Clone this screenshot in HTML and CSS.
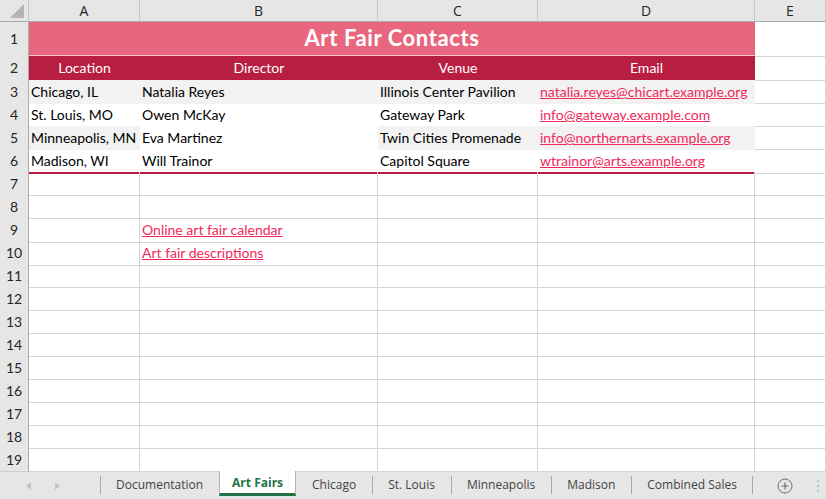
FILE: index.html
```html
<!DOCTYPE html>
<html lang="en">
<head>
    <meta charset="UTF-8">
    <title>Art Fair Contacts</title>
    <link rel="stylesheet" href="styles.css">
</head>
<body>

    <div class="sheet">
        <div class="row col-heads">
            <div class="corner"><span class="corner-tri"></span></div>
            <div class="col-head">A</div>
            <div class="col-head">B</div>
            <div class="col-head">C</div>
            <div class="col-head">D</div>
            <div class="col-head">E</div>
        </div>

        <div class="row r-title">
            <div class="row-num">1</div>
            <div class="title">Art Fair Contacts</div>
            <div class="cell"></div>
        </div>

        <div class="row r-head">
            <div class="row-num">2</div>
            <div class="th">Location</div>
            <div class="th">Director</div>
            <div class="th">Venue</div>
            <div class="th">Email</div>
            <div class="cell"></div>
        </div>

        <div class="row r-data">
            <div class="row-num">3</div>
            <div class="td band">Chicago, IL</div>
            <div class="td band">Natalia Reyes</div>
            <div class="td band">Illinois Center Pavilion</div>
            <div class="td band"><a href="#">natalia.reyes@chicart.example.org</a></div>
            <div class="cell"></div>
        </div>
        <div class="row r-data">
            <div class="row-num">4</div>
            <div class="td">St. Louis, MO</div>
            <div class="td">Owen McKay</div>
            <div class="td">Gateway Park</div>
            <div class="td"><a href="#">info@gateway.example.com</a></div>
            <div class="cell"></div>
        </div>
        <div class="row r-data">
            <div class="row-num">5</div>
            <div class="td band">Minneapolis, MN</div>
            <div class="td">Eva Martinez</div>
            <div class="td band">Twin Cities Promenade</div>
            <div class="td band"><a href="#">info@northernarts.example.org</a></div>
            <div class="cell"></div>
        </div>
        <div class="row r-data last">
            <div class="row-num">6</div>
            <div class="td">Madison, WI</div>
            <div class="td">Will Trainor</div>
            <div class="td">Capitol Square</div>
            <div class="td"><a href="#">wtrainor@arts.example.org</a></div>
            <div class="cell"></div>
        </div>

        <div class="row"><div class="row-num">7</div><div class="cell"></div><div class="cell"></div><div class="cell"></div><div class="cell"></div><div class="cell"></div></div>
        <div class="row"><div class="row-num">8</div><div class="cell"></div><div class="cell"></div><div class="cell"></div><div class="cell"></div><div class="cell"></div></div>
        <div class="row"><div class="row-num">9</div><div class="cell"></div><div class="cell"><a href="#">Online art fair calendar</a></div><div class="cell"></div><div class="cell"></div><div class="cell"></div></div>
        <div class="row"><div class="row-num">10</div><div class="cell"></div><div class="cell"><a href="#">Art fair descriptions</a></div><div class="cell"></div><div class="cell"></div><div class="cell"></div></div>
        <div class="row"><div class="row-num">11</div><div class="cell"></div><div class="cell"></div><div class="cell"></div><div class="cell"></div><div class="cell"></div></div>
        <div class="row"><div class="row-num">12</div><div class="cell"></div><div class="cell"></div><div class="cell"></div><div class="cell"></div><div class="cell"></div></div>
        <div class="row"><div class="row-num">13</div><div class="cell"></div><div class="cell"></div><div class="cell"></div><div class="cell"></div><div class="cell"></div></div>
        <div class="row"><div class="row-num">14</div><div class="cell"></div><div class="cell"></div><div class="cell"></div><div class="cell"></div><div class="cell"></div></div>
        <div class="row"><div class="row-num">15</div><div class="cell"></div><div class="cell"></div><div class="cell"></div><div class="cell"></div><div class="cell"></div></div>
        <div class="row"><div class="row-num">16</div><div class="cell"></div><div class="cell"></div><div class="cell"></div><div class="cell"></div><div class="cell"></div></div>
        <div class="row"><div class="row-num">17</div><div class="cell"></div><div class="cell"></div><div class="cell"></div><div class="cell"></div><div class="cell"></div></div>
        <div class="row"><div class="row-num">18</div><div class="cell"></div><div class="cell"></div><div class="cell"></div><div class="cell"></div><div class="cell"></div></div>
        <div class="row"><div class="row-num">19</div><div class="cell"></div><div class="cell"></div><div class="cell"></div><div class="cell"></div><div class="cell"></div></div>
    </div>

    <div class="tabbar">
        <div class="nav">
            <svg width="6" height="8" viewBox="0 0 6 8"><polygon points="5,0 5,8 0,4" fill="#c4c4c4"/></svg>
            <svg width="6" height="8" viewBox="0 0 6 8"><polygon points="1,0 1,8 6,4" fill="#c4c4c4"/></svg>
        </div>
        <div class="tab">Documentation</div>
        <div class="tab active">Art Fairs</div>
        <div class="tab">Chicago</div>
        <div class="tab">St. Louis</div>
        <div class="tab">Minneapolis</div>
        <div class="tab">Madison</div>
        <div class="tab end">Combined Sales</div>
        <div class="spacer"></div>
        <svg class="add" width="16" height="16" viewBox="0 0 16 16">
            <circle cx="8" cy="8" r="7" fill="none" stroke="#6f6f6f" stroke-width="1"/>
            <path d="M8 4.5v7M4.5 8h7" stroke="#6f6f6f" stroke-width="1.2"/>
        </svg>
        <div class="more">
            <span></span><span></span><span></span>
        </div>
    </div>

</body>
</html>
```

FILE: styles.css
```css
body {
    margin: 0;
    background: #fff;
    font-family: 'Lato', 'Noto Sans', sans-serif;
    color: #000;
    width: 826px;
    height: 499px;
    overflow: hidden;
}
.sheet {
    height: 471px;
}
.row {
    display: grid;
    grid-template-columns: 29px 111px 238px 160px 217px 71px;
    height: 23px;
}
.row > div {
    box-sizing: border-box;
    white-space: nowrap;
    overflow: visible;
}

/* headers */
.col-heads {
    height: 22px;
}
.corner {
    background: #e6e6e6;
    border-right: 1px solid #c8c8c8;
    border-bottom: 1px solid #ababab;
    position: relative;
}
.corner-tri {
    position: absolute;
    right: 4px;
    bottom: 3px;
    width: 0;
    height: 0;
    border-left: 14px solid transparent;
    border-bottom: 14px solid #b4b4b4;
}
.col-head {
    background: #e6e6e6;
    border-right: 1px solid #c8c8c8;
    border-bottom: 1px solid #ababab;
    font-family: 'Open Sans', sans-serif;
    font-size: 14px;
    color: #262626;
    text-align: center;
    line-height: 21px;
}
.row-num {
    background: #e6e6e6;
    border-right: 1px solid #ababab;
    border-bottom: 1px solid #cfcfcf;
    font-size: 14px;
    color: #262626;
    text-align: center;
    line-height: 23px;
}
.cell {
    border-right: 1px solid #d4d4d4;
    border-bottom: 1px solid #d4d4d4;
    font-size: 14px;
    line-height: 24px;
    padding-left: 2px;
}

/* table */
.r-title {
    height: 34px;
}
.r-title .row-num {
    line-height: 34px;
}
.title {
    grid-column: span 4;
    background: #e8677f;
    border-bottom: 2px solid #f5c3cd;
    color: #fff;
    font-size: 22px;
    font-weight: bold;
    letter-spacing: 0.6px;
    text-align: center;
    line-height: 32px;
}
.r-head {
    height: 24px;
}
.r-head .row-num {
    line-height: 24px;
}
.th {
    background: #b81e42;
    border-bottom: 1px solid #9a1736;
    color: #fff;
    font-size: 14px;
    text-align: center;
    line-height: 23px;
}
.td {
    font-size: 14px;
    line-height: 23px;
    padding-left: 2px;
}
.band {
    background: #f2f2f2;
}
.last .td {
    border-bottom: 2px solid #b81e42;
}
a {
    color: #f2295b;
    text-decoration: underline;
}

/* sheet tabs */
.tabbar {
    display: flex;
    height: 28px;
    background: #e6e6e6;
    border-top: 1px solid #c6c6c6;
    box-sizing: border-box;
    font-family: 'Open Sans', sans-serif;
    font-size: 12px;
    color: #444;
}
.nav {
    width: 100px;
    display: flex;
    align-items: center;
    gap: 22px;
    padding-left: 26px;
    box-sizing: border-box;
}
.tab {
    position: relative;
    display: flex;
    align-items: center;
    padding: 0 16px;
    margin-bottom: 2px;
}
.tab::before {
    content: "";
    position: absolute;
    left: 0;
    top: 4px;
    bottom: 3px;
    width: 1px;
    background: #a8a8a8;
}
.tab.end::after {
    content: "";
    position: absolute;
    right: 0;
    top: 4px;
    bottom: 3px;
    width: 1px;
    background: #a8a8a8;
}
.tab.active {
    background: #fff;
    margin-top: -1px;
    height: 25px;
    box-sizing: border-box;
    border-left: 1px solid #b4b4b4;
    border-right: 1px solid #b4b4b4;
    border-bottom: 3px solid #217346;
    color: #217346;
    font-weight: bold;
    padding: 1px 12px 0;
}
.tab.active::before,
.active + .tab::before {
    display: none;
}
.spacer {
    flex: 1;
}
.add {
    align-self: center;
    margin-right: 24px;
}
.more {
    display: flex;
    flex-direction: column;
    justify-content: center;
    gap: 3px;
    margin-right: 7px;
}
.more span {
    width: 2px;
    height: 2px;
    background: #c0c0c0;
}
```
